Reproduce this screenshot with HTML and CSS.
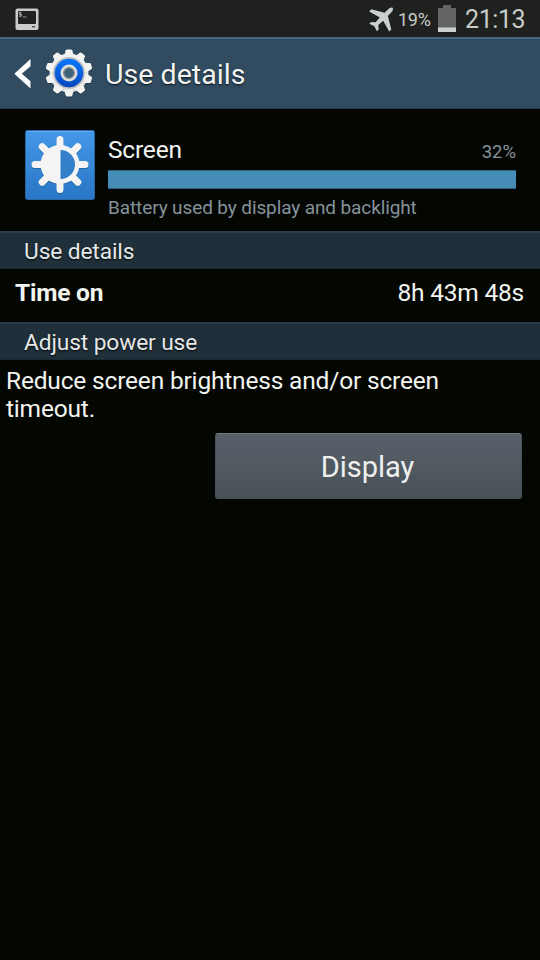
FILE: index.html
```html
<!DOCTYPE html>
<html lang="en">
<head>
<meta charset="utf-8">
<title>Use details</title>
<link rel="stylesheet" href="styles.css">
</head>
<body>
<div class="statusbar">
  <svg class="terminal" width="24" height="23" viewBox="0 0 24 23">
    <rect x=".5" y=".5" width="23" height="21.500" rx="2" fill="#c9ccc9"/>
    <rect x="3" y="3" width="18" height="13" rx="1" fill="#20221f"/>
    <path d="M6.500 4.500H4.300V6.300H6.400V8.200H4.100M5.300 3.800V9M7.800 8.900H11.500" fill="none" stroke="#b5b8b5" stroke-width=".8"/>
    <path d="M17 18.800H20" stroke="#333" stroke-width="1.200"/>
  </svg>
  <div class="indicators">
    <svg class="plane" width="25" height="25" viewBox="0 0 25 25">
      <path d="M23.600.8C22.300-.1 20.400 1 19 2.400L15.600 5.700L2.200 2.300L.2 4.400L10.900 10.400L6.600 15.300L2.200 14.900L.4 16.700L5.400 19.200L7.900 24.200L9.700 22.400L9.300 18L14.200 13.700L20.200 24.400L22.300 22.400L18.900 9L22.200 5.600C23.600 4.200 24.500 2.200 23.600.8Z" fill="#ccd0cd"/>
    </svg>
    <span class="percent">19%</span>
    <svg class="battery" width="18" height="27" viewBox="0 0 18 27">
      <path d="M5 0H13V3H18V27H0V3H5Z" fill="#636663"/>
      <path d="M0 22.500H18V27H0Z" fill="#cdd0cd"/>
    </svg>
    <span class="clock">21:13</span>
  </div>
</div>
<header class="actionbar">
  <svg class="back" width="18" height="30" viewBox="0 0 18 30">
    <path d="M16.500 0V7.200L7.800 14.700L16.500 22.200V29.500L.3 14.700Z" fill="#fff"/>
  </svg>
  <svg class="gear" width="48" height="50" viewBox="-24 -24 48 50">
    <defs>
      <linearGradient id="metal" x1="0" y1="-24" x2="0" y2="24" gradientUnits="userSpaceOnUse"><stop offset="0" stop-color="#f6f6f5"/><stop offset="1" stop-color="#d3d3d1"/></linearGradient>
      <linearGradient id="ring" x1="0" y1="0" x2="0" y2="1"><stop offset="0" stop-color="#0878ff"/><stop offset="1" stop-color="#0747bd"/></linearGradient>
      <path id="tooth" d="M-4.600-18L-3.200-22.800Q-2.800-23.600-1.800-23.600H1.800Q2.800-23.600 3.200-22.800L4.600-18V-15H-4.600Z"/>
      <g id="cog">
        <circle r="19.500"/>
        <use href="#tooth"/><use href="#tooth" transform="rotate(36)"/><use href="#tooth" transform="rotate(72)"/><use href="#tooth" transform="rotate(108)"/><use href="#tooth" transform="rotate(144)"/><use href="#tooth" transform="rotate(180)"/><use href="#tooth" transform="rotate(216)"/><use href="#tooth" transform="rotate(252)"/><use href="#tooth" transform="rotate(288)"/><use href="#tooth" transform="rotate(324)"/>
      </g>
    </defs>
    <use href="#cog" y="1" fill="#1d303f" opacity=".6"/>
    <use href="#cog" fill="url(#metal)"/>
    <circle r="15.800" fill="#b9bcbf" stroke="#c5c7c8" stroke-width=".8"/>
    <circle r="14.300" fill="url(#ring)"/>
    <circle r="8.500" fill="#dcdddd"/>
    <circle r="5.400" fill="#3f627b" stroke="#929597" stroke-width="1.200"/>
  </svg>
  <h1 class="title">Use details</h1>
</header>
<section class="usage">
  <svg class="brightness" width="72" height="72" viewBox="0 0 72 72">
    <defs>
      <linearGradient id="tile" x1="0" y1="0" x2="0" y2="1"><stop offset="0" stop-color="#4598e8"/><stop offset="1" stop-color="#2876c5"/></linearGradient>
      <path id="rays" d="M0-25V25M-25 0H25M-17.800-17.800L17.800 17.800M-17.800 17.800L17.800-17.800" fill="none" stroke-width="7" stroke-linecap="round"/>
    </defs>
    <rect x="1.500" y="1.500" width="69" height="69" rx="2" fill="url(#tile)" stroke="#2867a7"/>
    <path d="M3 2.500H69" stroke="#63adf0"/>
    <g transform="translate(36 35.500)">
      <g transform="translate(0 1)" opacity=".55"><use href="#rays" stroke="#184f87"/><circle r="19.500" fill="#184f87"/></g>
      <use href="#rays" stroke="#f3f4f3"/>
      <circle r="19.500" fill="#f3f4f3"/>
      <path d="M.5-14.500A14.500 14.500 0 0 1 .5 14.500Z" fill="#347fca"/>
    </g>
  </svg>
  <div class="usage-body">
    <div class="usage-head"><span class="name">Screen</span><span class="share">32%</span></div>
    <div class="bar"></div>
    <div class="summary">Battery used by display and backlight</div>
  </div>
</section>
<h2 class="section">Use details</h2>
<div class="row"><span class="label">Time on</span><span class="value">8h 43m 48s</span></div>
<h2 class="section">Adjust power use</h2>
<p class="hint">Reduce screen brightness and/or screen<br>timeout.</p>
<div class="actions"><button class="button" type="button">Display</button></div>
</body>
</html>
```
FILE: styles.css
```css
* { box-sizing: border-box; }
body {
  margin: 0;
  width: 540px;
  height: 960px;
  overflow: hidden;
  background: #040602;
  color: #f2f4f0;
  font-family: Roboto, sans-serif;
  font-weight: 400;
}
svg { display: block; flex: none; }
h1, h2, p { margin: 0; font-weight: 400; }
.statusbar {
  height: 37px;
  display: flex;
  justify-content: space-between;
  padding: 0 15px;
  background: #1f211e;
  color: #c8cbc8;
}
.terminal { margin-top: 8px; }
.indicators { display: flex; }
.plane { margin-top: 6.500px; }
.percent { width: 33px; margin: 0 7px 0 4px; font-size: 18px; line-height: 40px; letter-spacing: -.3px; }
.battery { margin-top: 5px; }
.clock { width: 60px; margin-left: 9px; font-size: 25px; line-height: 39px; letter-spacing: -.4px; }
.actionbar {
  height: 72px;
  display: flex;
  padding-left: 14px;
  background: #314c61;
  border-top: 2px solid #446780;
  border-bottom: 1px solid #263c4c;
}
.back { margin-top: 20px; }
.gear { margin: 10px 0 0 13px; }
.title {
  margin-left: 12px;
  font-size: 28.500px;
  line-height: 71px;
  letter-spacing: .05px;
  text-shadow: 0 1px 2px #0b1217;
}
.usage { height: 122px; display: flex; padding: 20px 24px 0; }
.usage-body { flex: 1; margin-left: 12px; }
.usage-head {
  display: flex;
  justify-content: space-between;
  align-items: baseline;
  height: 41px;
  line-height: 41px;
}
.name { font-size: 24.500px; letter-spacing: -.2px; }
.share { font-size: 18.500px; color: #84939b; }
.bar {
  height: 19px;
  background: #448bb5;
  border-top: 1px solid #2c617f;
  border-bottom: 1px solid #2c617f;
}
.summary { font-size: 19px; letter-spacing: -.11px; line-height: 38px; color: #84939b; }
.section {
  height: 38px;
  padding: 1px 0 0 24px;
  background: #20303a;
  border-top: 2px solid #2b3d48;
  border-bottom: 1px solid #1a2932;
  font-size: 22.750px;
  letter-spacing: -.12px;
  line-height: 36px;
  color: #e5e8e8;
  text-shadow: 0 1px 2px #000;
}
.row {
  height: 53px;
  display: flex;
  justify-content: space-between;
  padding: 0 16px 0 15px;
  font-size: 24.500px;
  letter-spacing: -.22px;
  line-height: 47px;
}
.label { font-weight: 700; }
.hint { padding: 7px 6px 0; font-size: 24.500px; letter-spacing: -.18px; line-height: 28px; white-space: nowrap; }
.actions { display: flex; justify-content: flex-end; padding: 10px 18px 0; }
.button {
  width: 307px;
  height: 66px;
  padding: 2px 2px 0 0;
  border: 1px solid #48525a;
  border-top-color: #707b82;
  border-radius: 3px;
  background: linear-gradient(#58616a, #495157);
  color: #edf0ef;
  font: 400 29px/62px Roboto, sans-serif;
}
```
